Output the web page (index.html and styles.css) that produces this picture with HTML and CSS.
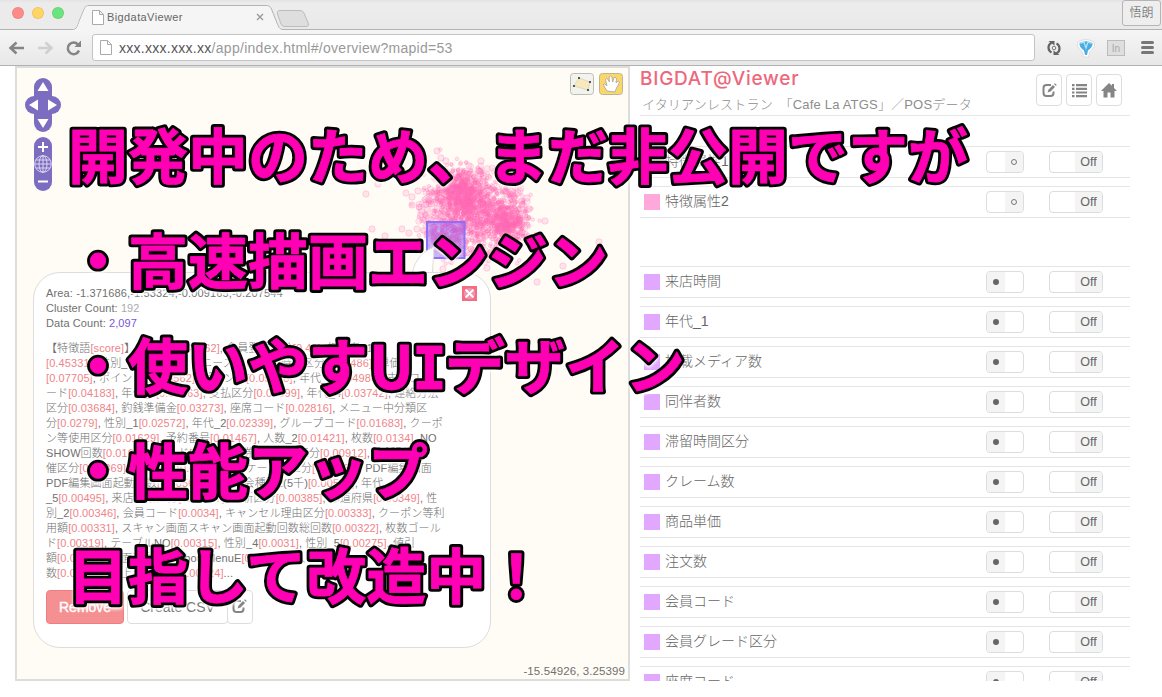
FILE: index.html
```html
<!DOCTYPE html>
<html lang="ja">
<head>
<meta charset="utf-8">
<title>BigdataViewer</title>
<link rel="stylesheet" href="styles.css">
</head>
<body>
<div class="window">
  <header class="chrome">
    <div class="tabbar">
      <svg class="tab-shape" width="320" height="31" viewBox="0 0 320 31">
        <path d="M0 29.500H72C77 29.500 77 26 79 21L84 9C85.500 6 86 5.500 89 5.500H265C269 5.500 270 6 271.500 9L277 23C279 28 280 29.500 284 29.500H320V31H0Z" fill="#f5f5f5"/>
        <path d="M0 29.500H72C77 29.500 77 26 79 21L84 9C85.500 6 86 5.500 89 5.500H265C269 5.500 270 6 271.500 9L277 23C279 28 280 29.500 284 29.500H320" fill="none" stroke="#b3b3b3"/>
        <path d="M0 4V29H72C76 29 77 26 78.500 21L83.500 9C85 6 86 5 89 5H265V4Z" fill="#ebebeb"/>
        <path d="M280 10.500H300Q303 10.500 304 13L308.500 24Q309 26.500 306 26.500H285Q282 26.500 281 24L277.500 14Q276.500 10.500 280 10.500Z" fill="#dedede" stroke="#bcbcbc"/>
      </svg>
      <div class="lights"><i class="red"></i><i class="yellow"></i><i class="green"></i></div>
      <svg class="page-icon" width="12" height="15" viewBox="0 0 12 15"><path d="M.5.500H7.500L11.500 4.500V14.500H.500ZM7.500.500V4.500H11.500" fill="#fff" stroke="#aaa"/></svg>
      <span class="tab-title">BigdataViewer</span>
      <svg class="tab-close" width="8" height="8" viewBox="0 0 8 8"><path d="M1 1L7 7M7 1L1 7" stroke="#999" stroke-width="1.400"/></svg>
      <span class="profile">悟朗</span>
    </div>
    <div class="toolbar">
      <svg class="nav" width="74" height="20" viewBox="0 0 74 20">
        <path d="M16 10H3M8.500 4.500L2.500 10L8.500 15.500" fill="none" stroke="#858585" stroke-width="2.500"/>
        <path d="M30 10H43M37.500 4.500L43.500 10L37.500 15.500" fill="none" stroke="#cfcfcf" stroke-width="2.500"/>
        <path d="M70 6.500A5.800 5.800 0 1 0 71 12.500" fill="none" stroke="#858585" stroke-width="2.500"/><path d="M73 2.500V9H66.500Z" fill="#858585"/>
      </svg>
      <div class="address">
        <svg width="12" height="15" viewBox="0 0 12 15"><path d="M.5.500H7.500L11.500 4.500V14.500H.500ZM7.500.500V4.500H11.500" fill="#fff" stroke="#aaa"/></svg>
        <span class="url"><b>xxx.xxx.xxx.xx</b>/app/index.html#/overview?mapid=53</span>
      </div>
      <svg class="tools" width="110" height="24" viewBox="0 0 110 24">
        <g fill="none" stroke="#636363" stroke-width="2.200"><path d="M6.500 16.500A5.500 5.500 0 0 1 6.500 6.700M11.500 17.300A5.500 5.500 0 0 0 11.500 7.500"/></g>
        <path d="M3.500 5H9.500V9.500ZM14.500 19H8.500V14.500Z" fill="#636363"/>
        <circle cx="9" cy="12" r="1.800" fill="none" stroke="#777"/>
        <path d="M33 6Q41 1 49 6Q51 11 45 15.500L43.500 21H38.500L37 15.500Q31 11 33 6Z" fill="#fff" stroke="#ddd"/>
        <path d="M34.500 7Q41 3.500 47.500 7Q48 11 43 14.500L42 19H40L39 14.500Q34 11 34.500 7Z" fill="#4baee2"/><path d="M35.500 7.500L39 6L41 12L43 6L46.500 7.500" fill="none" stroke="#b8e5fa" stroke-width="1.200"/>
        <rect x="62.500" y="4.500" width="17" height="15" fill="#dedede" stroke="#bbb"/><text x="71" y="15.500" text-anchor="middle" class="ext">In</text>
        <path d="M97.500 6.500H107.500M97.500 11.500H107.500M97.500 16.500H107.500" stroke="#777" stroke-width="3" stroke-linecap="round"/>
      </svg>
    </div>
  </header>

  <main class="content">
    <section class="map">
      <svg class="layer" width="611" height="611" viewBox="17 68 611 611">
        <g id="points"></g>
        <rect x="427" y="222" width="37.500" height="36" fill="#805cff" fill-opacity=".42" stroke="#8b70fb" stroke-width="2"/>
        <g fill="#7c6dc0"><rect x="34" y="78" width="18" height="54" rx="9"/><rect x="25" y="96" width="36" height="18" rx="9"/><rect x="34" y="137" width="18" height="54" rx="9"/></g>
        <path d="M43 82L48.500 91H37.500ZM43 128L48.500 119H37.500ZM29 105L38 99.500V110.500ZM57 105L48 99.500V110.500Z" fill="#fff"/>
        <path d="M38 147H48M43 142V152M38 181.500H48" stroke="#fff" stroke-width="2"/>
        <g fill="none" stroke="#e4dff5" stroke-width=".9"><circle cx="43" cy="164" r="8.300"/><ellipse cx="43" cy="164" rx="4" ry="8.300"/><path d="M43 156V172M35 164H51M36 160H50M36 168H50"/></g>
        <rect x="570.500" y="73.500" width="23" height="21" rx="3" fill="#f2f2ee" stroke="#bdbdb8"/>
        <path d="M579 78L590 82L588 90L574 86Z" fill="#f8e8bd" stroke="#d8cfae" stroke-width=".7"/><path d="M578 77h2v2h-2zM589 81h2v2h-2zM587 89h2v2h-2zM573 85h2v2h-2z" fill="#555"/>
        <rect x="599.500" y="73.500" width="23" height="21" rx="3" fill="#fad76c" stroke="#bdb694"/>
        <path d="M607 91L604 86Q602.500 83.500 605 84L607 86L605.500 79.500Q606.500 77.500 608 79.500L609.500 82L609 77Q610.500 75 612 77L612.700 82L614 77.500Q616 76.500 616.500 79L616 83L618 81Q620 81 619 83.500L616.500 88L615 92Z" fill="#fff" stroke="#aaa296" stroke-width=".8"/>
        <path d="M412.500 274Q416 254 434 247L432.500 274Z" fill="#fff"/><path d="M412.500 272Q416 254 434 247L432.500 272" fill="none" stroke="#ddd"/>
      </svg>
      <article class="popup">
        <svg class="popup-close" width="15" height="15" viewBox="0 0 15 15"><path d="M0 0H15V15H0Z" fill="#f56d80"/><circle cx="7.500" cy="7.500" r="5.500" fill="#ee97b4"/><path d="M3.500 3.500L11.500 11.500M11.500 3.500L3.500 11.500" stroke="#fff" stroke-width="1.800"/></svg>
        <p class="area">Area: -1.371686,-1.53324,-0.009165,-0.207544</p>
        <p>Cluster Count: <span class="muted">192</span></p>
        <p>Data Count: <span class="violet">2,097</span></p>
        <div class="scores">
          <p>【特徴語<i>[score]</i>】 年代_6<i>[0.49462]</i>, 会員登録区分<i>[0.46]</i>, 担当者_1</p>
          <p><i>[0.45331]</i>, 性別_3<i>[0.12]</i>, エリアニーズ<i>[0.0921]</i>, 時間区分<i>[0.08486]</i>, 単価</p>
          <p><i>[0.07705]</i>, ポイント数<i>[0.0562]</i>, ポイント<i>[0.05458]</i>, 年代_3<i>[0.04986]</i>, 支払コ</p>
          <p>ード<i>[0.04183]</i>, 年代_1<i>[0.04163]</i>, 支払区分<i>[0.04099]</i>, 年代_4<i>[0.03742]</i>, 連絡方法</p>
          <p>区分<i>[0.03684]</i>, 釣銭準備金<i>[0.03273]</i>, 座席コード<i>[0.02816]</i>, メニュー中分類区</p>
          <p>分<i>[0.0279]</i>, 性別_1<i>[0.02572]</i>, 年代_2<i>[0.02339]</i>, グループコード<i>[0.01683]</i>, クーポ</p>
          <p>ン等使用区分<i>[0.01629]</i>, 予約番号<i>[0.01467]</i>, 人数_2<i>[0.01421]</i>, 枚数<i>[0.0134]</i>, NO</p>
          <p>SHOW回数<i>[0.01619]</i>, コード<i>[0.01032]</i>, 券種等発行区分<i>[0.00912]</i>, 店舗別開</p>
          <p>催区分<i>[0.00869]</i>, 会員区分<i>[0.0071]</i>, アンケート先区分<i>[0.00663]</i>, PDF編集画面</p>
          <p>PDF編集画面起動回数<i>[0.0056]</i>, 回数, 入会種別2(5千)<i>[0.00506]</i>, 年代</p>
          <p>_5<i>[0.00495]</i>, 来店回数区分<i>[0.00437]</i>, 更新区分<i>[0.00385]</i>, 都道府県<i>[0.00349]</i>, 性</p>
          <p>別_2<i>[0.00346]</i>, 会員コード<i>[0.0034]</i>, キャンセル理由区分<i>[0.00333]</i>, クーポン等利</p>
          <p>用額<i>[0.00331]</i>, スキャン画面スキャン画面起動回数総回数<i>[0.00322]</i>, 枚数ゴール</p>
          <p>ド<i>[0.00319]</i>, テーブルNO<i>[0.00315]</i>, 性別_4<i>[0.0031]</i>, 性別_5<i>[0.00275]</i>, 値引</p>
          <p>額<i>[0.00272]</i>, 画面起動回数AboutMenuE<i>[0.00251]</i>, 人</p>
          <p>数<i>[0.00248]</i>, 売上金額合計<i>[0.00224]</i>...</p>
        </div>
        <div class="actions"><span class="btn danger">Remove</span><span class="btn">Create CSV</span><span class="btn icon"><svg width="15" height="15" viewBox="0 0 15 15"><use href="#edit"/></svg></span></div>
      </article>
      <div class="coords">-15.54926, 3.25399</div>
    </section>

    <section class="panel">
      <div class="panel-head">
        <div class="heading"><h1>BIGDAT@Viewer</h1><p>イタリアンレストラン　「Cafe La ATGS」／POSデータ</p></div>
        <nav class="head-buttons">
          <span><svg width="15" height="15" viewBox="0 0 15 15"><g id="edit"><path d="M9 2H4.500Q1.500 2 1.500 5V10Q1.500 13 4.500 13H8.500Q11.500 13 11.500 10V8.500" fill="none" stroke="#858585" stroke-width="2"/><path d="M5.500 9.500L6.500 6.500L11 2L13 4L8.500 8.500ZM12 1L13 .2L14.700 2L14 3Z" fill="#858585"/></g></svg></span>
          <span><svg width="15" height="15" viewBox="0 0 15 15"><path d="M0 1H2.500V3.200H0ZM4 1H15V3.200H4ZM0 4.700H2.500V6.900H0ZM4 4.700H15V6.900H4ZM0 8.400H2.500V10.600H0ZM4 8.400H15V10.600H4ZM0 12.100H2.500V14.300H0ZM4 12.100H15V14.300H4Z" fill="#858585"/></svg></span>
          <span><svg width="16" height="15" viewBox="0 0 16 15"><path d="M8 0L11 2.800V1H13V5L16 8H13.500V14.500H9.500V9.500H6.500V14.500H2.500V8H0Z" fill="#858585"/></svg></span>
        </nav>
      </div>
      <div class="rows features" id="features"></div>
      <div class="rows attributes" id="attributes"></div>
    </section>
  </main>
</div>

<svg class="caption" width="1162" height="697" viewBox="0 0 1162 697">
  <defs>
    <g id="caption-text">
      <text x="68" y="179">開発中のため、まだ非公開ですが</text>
      <text x="68" y="284">・高速描画エンジン</text>
      <text x="68" y="389">・使いやす<tspan x="369">U</tspan><tspan class="serif-i" x="412">I</tspan><tspan x="445">デザイン</tspan></text>
      <text x="68" y="494">・性能アップ</text>
      <text x="68" y="599">目指して改造中！</text>
    </g>
  </defs>
  <use class="caption-outline" href="#caption-text"/>
  <use class="caption-face" href="#caption-text"/>
</svg>
<script src="app.js"></script>
</body>
</html>
```

FILE: styles.css
```css
* { box-sizing: border-box; }
body { margin: 0; background: #fff; color: #707070; font-family: "Liberation Sans", "Noto Sans CJK JP", sans-serif; font-weight: 300; overflow: hidden; }
p, h1 { margin: 0; font-weight: inherit; }
svg { display: block; flex: none; }
.window { height: 681px; overflow: hidden; display: flex; flex-direction: column; }

.chrome { flex: none; height: 66px; background: #f0f0f0; border-bottom: 1px solid #b1b1b1; }
.tabbar { position: relative; height: 30px; display: flex; align-items: center; background: linear-gradient(#e3e3e3, #ededed 4px, #e9e9e9); border-bottom: 1px solid #b3b3b3; padding: 5px 0 0 12px; }
.tab-shape { position: absolute; left: 0; top: 0; }
.lights, .page-icon, .tab-title, .tab-close { position: relative; }
.lights { display: flex; gap: 8px; margin-top: -9px; }
.lights i { width: 12px; height: 12px; border-radius: 50%; border: 1px solid rgba(190, 80, 60, .15); }
.red { background: #fc8b8a; }
.yellow { background: #ffd666; }
.green { background: #67e57e; }
.page-icon { margin-left: 28px; }
.tab-title { margin-left: 3px; width: 149px; font-size: 11px; letter-spacing: .4px; color: #666; }
.profile { margin: -8px 1px 0 auto; width: 39px; height: 26px; border: 1px solid #b5b5b5; border-radius: 3px; background: #eee; font-size: 12px; line-height: 25px; text-align: center; color: #555; }
.toolbar { height: 35px; display: flex; align-items: center; padding-left: 8px; background: linear-gradient(#f5f5f5, #e8e8e8); }
.nav { margin-right: 10px; }
.address { width: 943px; height: 27px; border: 1px solid #c4c4c4; border-radius: 3px; background: #fff; display: flex; align-items: center; padding-left: 7px; gap: 7px; }
.url { font-size: 14px; letter-spacing: .28px; color: #999; white-space: nowrap; }
.url b { font-weight: normal; color: #555; }
.tools { margin-left: 10px; }
.ext { font-size: 10px; fill: #aaa; }

.content { flex: 1; min-height: 0; display: flex; padding-left: 15px; }
.map { position: relative; flex: none; width: 615px; height: 615px; border: 2px solid #ddd; background: #fffcf5; }
.layer { position: absolute; left: 0; top: 0; }
.popup { position: absolute; left: 16px; top: 204px; width: 458px; height: 376px; border: 1px solid #ddd; border-radius: 27px; background: #fff; padding: 13px 12px; font-size: 11px; line-height: 15px; letter-spacing: .1px; white-space: nowrap; }
.area { letter-spacing: .14px; }
.popup-close { position: absolute; right: 13px; top: 13px; }
.scores { margin-top: 10px; }
.scores i { font-style: normal; color: #f08489; }
.muted { color: #aaa; }
.violet { color: #7756dc; }
.actions { display: flex; gap: 3px; margin-top: 9px; letter-spacing: 0; }
.btn { height: 34px; border: 1px solid #ddd; border-radius: 4px; background: #fff; padding: 0 12px; font-size: 14px; line-height: 32px; color: #777; }
.btn.danger { background: #f59092; border-color: #ef7d80; color: #fff; -webkit-text-stroke: .4px #fff; }
.btn.icon { margin-left: -4px; width: 26px; padding: 8px 4px; }
.coords { position: absolute; right: 3px; bottom: 0; font-size: 11.500px; line-height: 15px; letter-spacing: .1px; }

.panel { width: 490px; margin-left: 10px; }
.panel-head { height: 50px; border-bottom: 1px solid #e7e7e7; display: flex; justify-content: space-between; }
.heading h1 { font-family: Inter, sans-serif; font-weight: 500; font-size: 19px; line-height: 26px; color: #ee677b; letter-spacing: .75px; }
.heading p { font-size: 13px; line-height: 20px; margin-top: 3px; padding-left: 2px; color: #8d8d8d; letter-spacing: .19px; white-space: nowrap; }
.head-buttons { display: flex; gap: 4px; padding: 8px 8px 0 0; }
.head-buttons span { width: 26px; height: 32px; border: 1px solid #ddd; border-radius: 4px; display: flex; align-items: center; justify-content: center; }
.rows { display: flex; flex-direction: column; gap: 8px; }
.features { margin-top: 30px; }
.attributes { margin-top: 48px; }
.row { height: 32px; border-top: 1px solid #e4e4e4; border-bottom: 1px solid #e4e4e4; display: flex; align-items: center; padding-left: 4px; font-size: 14px; white-space: nowrap; }
.swatch { width: 16px; height: 16px; margin-right: 5px; background: #e2a8ff; }
.features .swatch { background: #ffa8da; }
.name { width: 321px; line-height: 20px; margin-top: -3px; color: #666; }
.switch { height: 22px; border: 1px solid #ddd; border-radius: 4px; display: flex; overflow: hidden; background: #fff; }
.knob { width: 38px; margin-right: 25px; }
.knob i { width: 18px; background: #f4f4f4; display: flex; align-items: center; justify-content: center; }
.knob i::after { content: ""; width: 6px; height: 6px; border-radius: 50%; background: #666; }
.features .knob { justify-content: flex-end; }
.features .knob i::after { background: none; border: 1px solid #777; box-sizing: border-box; }
.toggle { width: 54px; justify-content: flex-end; }
.toggle span { width: 27px; background: #f4f4f4; font-size: 12.500px; line-height: 20px; text-align: center; color: #666; }

.caption { position: absolute; left: 0; top: 0; font: 700 60px "Noto Sans CJK JP", sans-serif; stroke-linejoin: round; filter: drop-shadow(0 2px 1.500px #fff); }
.caption-outline { fill: #000; stroke: #000; stroke-width: 6.500px; }
.caption-face { fill: #ff00b4; stroke: #ff00b4; stroke-width: .8px; }
.serif-i { font-family: "DejaVu Sans Mono", monospace; font-size: 58px; }
```

FILE: app.js
```js
const features = ["特徴属性1", "特徴属性2"];
const attributes = ["来店時間", "年代_1", "掲載メディア数", "同伴者数", "滞留時間区分", "クレーム数", "商品単価", "注文数", "会員コード", "会員グレード区分", "座席コード"];

function fill(id, names) {
  document.getElementById(id).innerHTML = names.map(name =>
    `<div class="row"><span class="swatch"></span><span class="name">${name}</span><span class="switch knob"><i></i></span><span class="switch toggle"><span>Off</span></span></div>`
  ).join("");
}
fill("features", features);
fill("attributes", attributes);

// Seeded generator keeps the scatter identical on every load.
let seed = 20;
const random = () => (seed = (seed * 16807) % 2147483647) / 2147483647;
const gauss = () => Math.sqrt(-2 * Math.log(random())) * Math.cos(2 * Math.PI * random());
const dot = (x, y, r, o) => `<circle cx="${x.toFixed(1)}" cy="${y.toFixed(1)}" r="${r}" fill="#ff69b4" fill-opacity="${o}" stroke="#ff69b4" stroke-opacity="${o * 1.6}"/>`;

let dots = dot(435, 210, 17, .12);
const clusters = [[460, 194, 13, 12, 650], [474, 200, 16, 14, 400], [507, 222, 10, 12, 420], [475, 224, 20, 13, 500], [448, 240, 10, 10, 160]];
for (const [cx, cy, sx, sy, n] of clusters)
  for (let i = 0; i < n; i++) {
    const x = cx + gauss() * sx, y = cy + gauss() * sy;
    dots += dot(x, y, 1.8, .16);
  }
for (let i = 0; i < 240; i++) {
  const a = random() * 2 * Math.PI, d = .72 + random() * .36;
  dots += dot(474 + Math.cos(a) * 52 * d, 214 + Math.sin(a) * 46 * d, 3, .13);
}
const outliers = [[437, 151], [441, 158], [446, 161], [481, 161], [366, 194], [372, 229], [406, 193], [418, 191], [412, 197], [412, 205], [402, 229], [409, 233], [417, 229], [385, 236], [378, 184], [545, 221], [599, 242], [563, 266], [537, 282], [487, 268], [518, 193], [527, 198], [511, 205], [529, 209], [500, 255], [443, 269], [540, 250]];
for (const [x, y] of outliers) dots += dot(x, y, 3.2, .16);
document.getElementById("points").innerHTML = dots;
```
